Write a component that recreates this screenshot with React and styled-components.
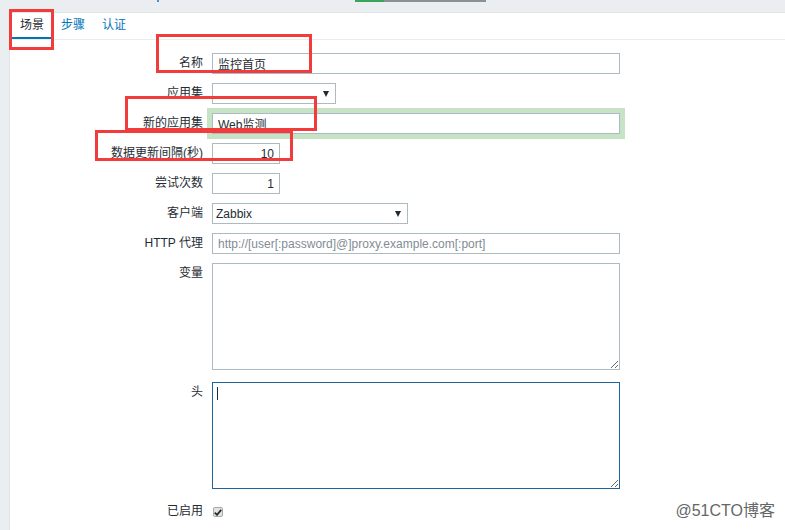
import React from 'react';
import styled, { createGlobalStyle } from 'styled-components';

const GlobalStyle = createGlobalStyle`
  html, body {
    margin: 0;
    padding: 0;
    background: #ebeef0;
    font-family: "Liberation Sans", Arial, "Noto Sans CJK SC", sans-serif;
    font-size: 12px;
    color: #1f2c33;
  }
`;

const Page = styled.div`
  position: relative;
  width: 785px;
  height: 530px;
  overflow: hidden;
`;

const TopStrip = styled.div`
  height: 12px;
  display: flex;
  align-items: flex-start;
`;

const StripBit = styled.div`
  height: 2px;
  width: ${p => p.w}px;
  margin-left: ${p => p.ml || 0}px;
  background: ${p => p.color};
`;

const Panel = styled.div`
  margin-left: 9px;
  background: #fff;
  border-left: 1px solid #dfe4e7;
  border-top: 1px solid #dfe4e7;
  height: 520px;
`;

const TabBar = styled.div`
  display: flex;
  height: 26px;
  border-bottom: 1px solid #ebeef0;
`;

const Tab = styled.div`
  padding: 0 9px 0 ${p => (p.active ? 10 : 8)}px;
  line-height: 24px;
  font-size: 12px;
  color: ${p => (p.active ? '#1f2c33' : '#0275b8')};
  border-bottom: 2px solid ${p => (p.active ? '#0275b8' : 'transparent')};
`;

const Form = styled.div`
  display: grid;
  grid-template-columns: 193px 1fr;
  column-gap: 9px;
  row-gap: 9px;
  padding-top: 13px;
`;

const Label = styled.div`
  text-align: right;
  line-height: 21px;
  white-space: nowrap;
  color: #1f2c33;
`;

const Field = styled.div`
  display: flex;
  align-items: flex-start;
  margin-bottom: ${p => p.mb || 0}px;
`;

const TextInput = styled.input`
  box-sizing: border-box;
  width: ${p => p.w}px;
  height: 21px;
  margin: 0;
  padding: 0 5px;
  border: 1px solid #acbbc2;
  background: #fff;
  font-family: inherit;
  font-size: 12px;
  color: #1f2c33;
  text-align: ${p => (p.right ? 'right' : 'left')};
  outline: none;
  box-shadow: ${p => (p.highlight ? '0 0 0 5px #c6e3c6' : 'none')};

  &::placeholder {
    color: #7f8d94;
  }
`;

const Select = styled.div`
  box-sizing: border-box;
  width: ${p => p.w}px;
  height: 21px;
  padding: 0 6px 0 3px;
  border: 1px solid #acbbc2;
  display: flex;
  align-items: center;
  justify-content: space-between;
  font-size: 12px;
`;

const Arrow = styled.span`
  width: 0;
  height: 0;
  border-left: 3.5px solid transparent;
  border-right: 3.5px solid transparent;
  border-top: 6px solid #1f2c33;
  margin-top: 1px;
`;

const AreaWrap = styled.div`
  position: relative;
  width: 408px;
  height: 107px;
`;

const TextArea = styled.textarea`
  box-sizing: border-box;
  display: block;
  width: 408px;
  height: 107px;
  margin: 0;
  padding: 4px 5px;
  border: 1px solid ${p => (p.focused ? '#1f65a0' : '#acbbc2')};
  font-family: inherit;
  font-size: 12px;
  color: #1f2c33;
  outline: none;
`;

const Caret = styled.span`
  position: absolute;
  left: 5px;
  top: 5px;
  width: 1px;
  height: 13px;
  background: #1f2c33;
`;

const CheckBox = styled.span`
  box-sizing: border-box;
  width: 10px;
  height: 10px;
  margin: 6px 0 0 1px;
  border: 1px solid #a8a8a8;
  border-radius: 2px;
  background: #e2e2e2;
  display: flex;
  align-items: center;
  justify-content: center;
`;

const Mark = styled.div`
  position: absolute;
  left: ${p => p.x}px;
  top: ${p => p.y}px;
  width: ${p => p.w}px;
  height: ${p => p.h}px;
  box-sizing: border-box;
  border: 3px solid #f23b3b;
  pointer-events: none;
`;

const Watermark = styled.div`
  position: absolute;
  right: 10px;
  bottom: 9px;
  font-size: 16px;
  color: #666;
  font-family: "Liberation Sans", Arial, "Noto Sans CJK SC", sans-serif;
`;

export default function App() {
  return (
    <Page>
      <GlobalStyle />
      <TopStrip>
        <StripBit ml={157} w={2} color="#4a90d9" />
        <StripBit ml={196} w={29} color="#3aa45a" />
        <StripBit w={102} color="#8a9196" />
      </TopStrip>
      <Panel>
        <TabBar>
          <Tab active>场景</Tab>
          <Tab>步骤</Tab>
          <Tab>认证</Tab>
        </TabBar>
        <Form>
          <Label>名称</Label>
          <Field>
            <TextInput w={408} defaultValue="监控首页" readOnly />
          </Field>

          <Label>应用集</Label>
          <Field>
            <Select w={124}>
              <span />
              <Arrow />
            </Select>
          </Field>

          <Label>新的应用集</Label>
          <Field>
            <TextInput w={408} highlight defaultValue="Web监测" readOnly />
          </Field>

          <Label>数据更新间隔(秒)</Label>
          <Field>
            <TextInput w={68} right defaultValue="10" readOnly />
          </Field>

          <Label>尝试次数</Label>
          <Field>
            <TextInput w={68} right defaultValue="1" readOnly />
          </Field>

          <Label>客户端</Label>
          <Field>
            <Select w={196}>
              <span>Zabbix</span>
              <Arrow />
            </Select>
          </Field>

          <Label>HTTP 代理</Label>
          <Field>
            <TextInput
              w={408}
              placeholder="http://[user[:password]@]proxy.example.com[:port]"
              readOnly
            />
          </Field>

          <Label>变量</Label>
          <Field mb={3}>
            <AreaWrap>
              <TextArea readOnly />
            </AreaWrap>
          </Field>

          <Label>头</Label>
          <Field mb={3}>
            <AreaWrap>
              <TextArea focused readOnly />
              <Caret />
            </AreaWrap>
          </Field>

          <Label>已启用</Label>
          <Field>
            <CheckBox>
              <svg width="8" height="7" viewBox="0 0 8 7">
                <path d="M0.8 3.6 L3 5.8 L7.2 0.8" fill="none" stroke="#1f2c33" strokeWidth="1.8" />
              </svg>
            </CheckBox>
          </Field>
        </Form>
      </Panel>

      <Mark x={9} y={9} w={45} h={41} />
      <Mark x={156} y={34} w={156} h={39} />
      <Mark x={125} y={96} w={192} h={35} />
      <Mark x={95} y={130} w={198} h={31} />

      <Watermark>@51CTO博客</Watermark>
    </Page>
  );
}
